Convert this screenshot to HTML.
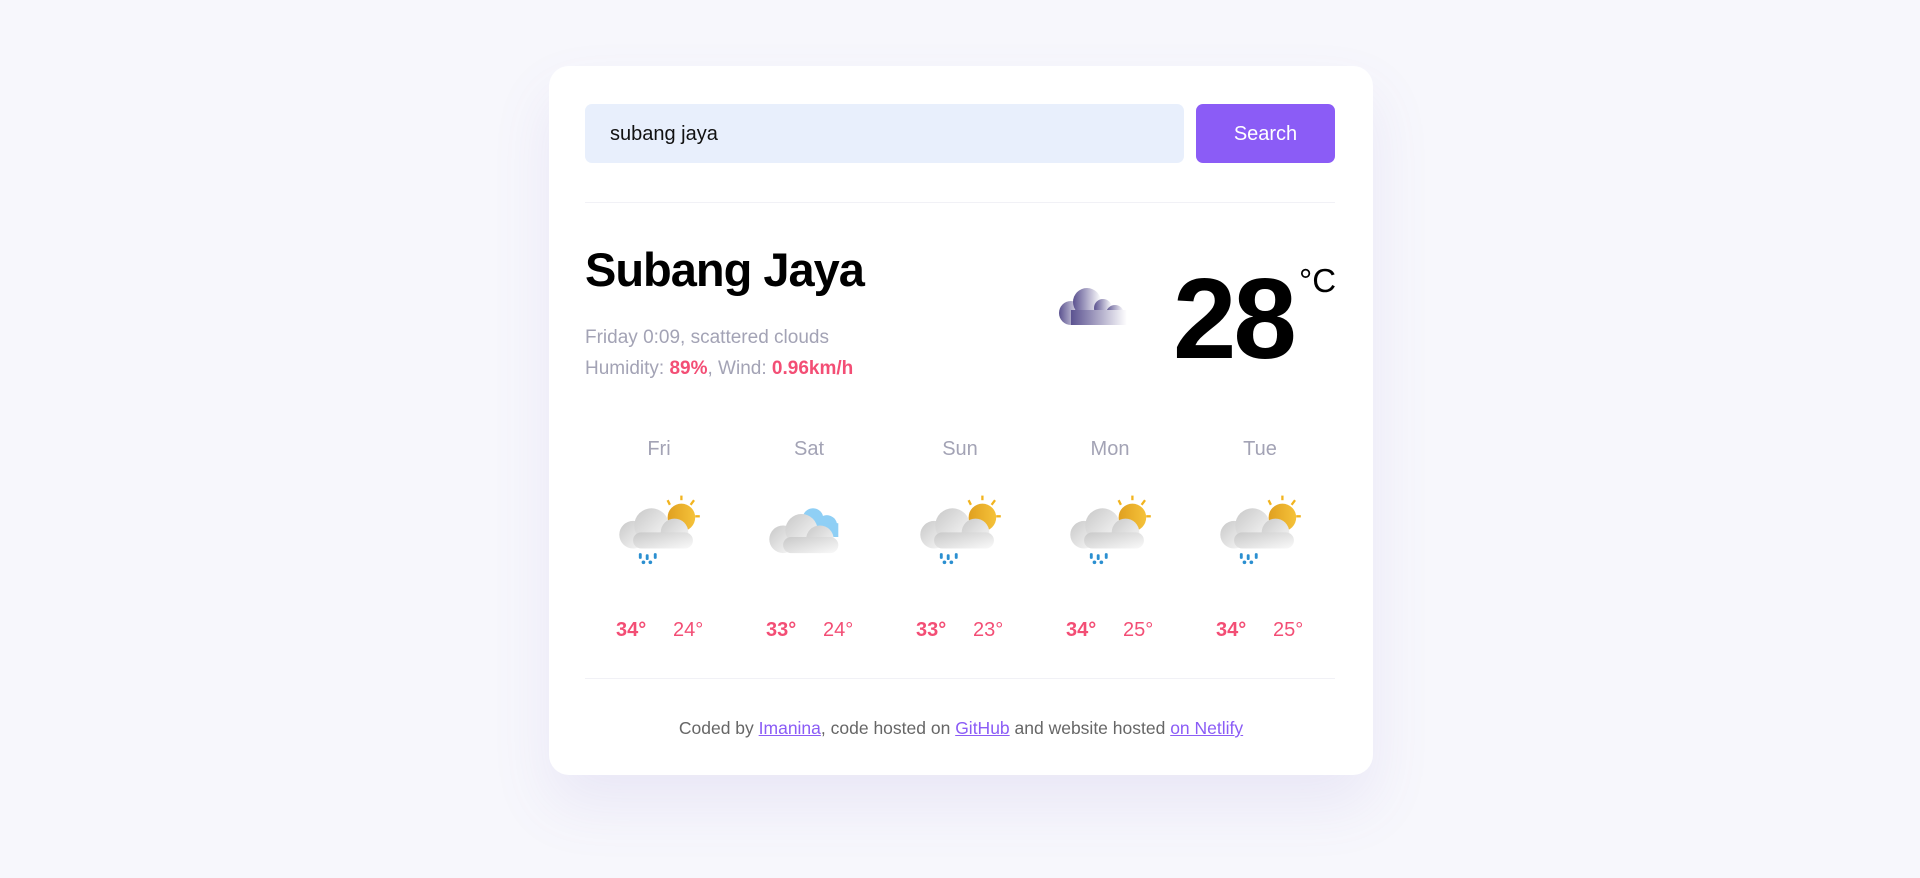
<!DOCTYPE html>
<html><head><meta charset="utf-8"><style>
*{box-sizing:border-box;margin:0;padding:0}
body{width:1920px;height:878px;background:#f7f7fc;font-family:"Liberation Sans",sans-serif;position:relative;overflow:hidden}
.card{position:absolute;left:549px;top:66px;width:824px;height:709px;background:#fff;border-radius:20px;box-shadow:0 30px 60px rgba(120,100,200,.10)}
.abs{position:absolute}
.input{left:36px;top:38px;width:599px;height:59px;background:#e8effc;border-radius:7px;font-size:20px;padding:19px 25px;color:#111}
.btn{left:647px;top:38px;width:139px;height:59px;background:#8b5cf6;border-radius:7px;color:#fff;font-size:20px;text-align:center;line-height:61px}
.hr{left:36px;width:750px;height:1px;background:#f1f1f6}
h1{left:36px;top:176px;font-size:47px;font-weight:bold;color:#000;letter-spacing:-1px}
.sub{left:36px;top:256px;font-size:19px;color:#a3a3b5;line-height:31px}
.pk{color:#f34e75;font-weight:bold}
.temp{left:624px;top:188px;font-size:114px;font-weight:bold;color:#000;letter-spacing:-3px}
.unit{left:750px;top:196px;font-size:33px;color:#000}
.dn{font-size:20px;color:#a3a3b5;position:absolute;top:372px;width:150px;text-align:center}
.ic{position:absolute}
.t{position:absolute;top:553px;font-size:20px;color:#f34e75}
.foot{left:0;width:824px;top:652px;text-align:center;font-size:17.5px;color:#666}
.foot a{color:#8b5cf6;text-decoration:underline}
</style></head><body>
<div class="card">
<div class="abs input">subang jaya</div>
<div class="abs btn">Search</div>
<div class="abs hr" style="top:136px"></div>
<h1 class="abs">Subang Jaya</h1>
<div class="abs sub">Friday 0:09, scattered clouds<br>Humidity: <span class="pk">89%</span>, Wind: <span class="pk">0.96km/h</span></div>
<svg class="abs" style="left:508px;top:214px" width="80" height="46" viewBox="0 0 80 46"><defs><linearGradient id="g" x1="0" x2="1"><stop offset="0" stop-color="#5b5290"/><stop offset="1" stop-color="#fff"/></linearGradient></defs><g fill="url(#g)"><circle cx="14" cy="33" r="12"/><circle cx="30" cy="22" r="14"/><circle cx="46" cy="28" r="9"/><circle cx="58" cy="34" r="9"/><rect x="14" y="30" width="56" height="15"/></g></svg>
<div class="abs temp">28</div>
<div class="abs unit">°C</div>
<div class="abs dn" style="left:35px">Fri</div>
<div class="abs dn" style="left:185px">Sat</div>
<div class="abs dn" style="left:336px">Sun</div>
<div class="abs dn" style="left:486px">Mon</div>
<div class="abs dn" style="left:636px">Tue</div>
<svg width="0" height="0" style="position:absolute"><defs>
<linearGradient id="cg" x1="0" x2="1" y1="0" y2="1"><stop offset="0" stop-color="#c8c8c8"/><stop offset="1" stop-color="#fafafa"/></linearGradient>
<linearGradient id="sg" x1="0" x2="1"><stop offset="0" stop-color="#e0a020"/><stop offset="1" stop-color="#f5c23a"/></linearGradient>
<symbol id="rain" viewBox="0 0 80 80"><g stroke="#f2b41f" stroke-width="2"><line x1="44" y1="8" x2="46" y2="12"/><line x1="56" y1="4" x2="56" y2="8"/><line x1="67" y1="8" x2="64" y2="12"/><line x1="68" y1="22" x2="72" y2="22"/></g><circle cx="56" cy="23" r="12" fill="url(#sg)"/><g fill="url(#cg)"><circle cx="14" cy="38" r="12"/><circle cx="30" cy="30" r="15"/><circle cx="50" cy="36" r="12"/><rect x="14" y="36" width="52" height="14" rx="7"/></g><g fill="#2b8fd0"><rect x="19" y="54" width="2.5" height="5" rx="1"/><rect x="25" y="55" width="2.5" height="5" rx="1"/><rect x="32" y="54" width="2.5" height="5" rx="1"/><circle cx="23" cy="62" r="1.6"/><circle cx="29" cy="62" r="1.6"/></g></symbol>
<symbol id="cl" viewBox="0 0 80 80"><g fill="#8fcff5"><circle cx="40" cy="24" r="9"/><circle cx="52" cy="30" r="9"/><rect x="34" y="28" width="28" height="12"/></g><g fill="url(#cg)"><circle cx="14" cy="42" r="12"/><circle cx="30" cy="34" r="14"/><circle cx="46" cy="42" r="12"/><rect x="14" y="40" width="48" height="14" rx="7"/></g></symbol>
</defs></svg>
<svg class="ic" style="left:68px;top:425px" width="92" height="92"><use href="#rain"/></svg>
<svg class="ic" style="left:218px;top:425px" width="92" height="92"><use href="#cl"/></svg>
<svg class="ic" style="left:369px;top:425px" width="92" height="92"><use href="#rain"/></svg>
<svg class="ic" style="left:519px;top:425px" width="92" height="92"><use href="#rain"/></svg>
<svg class="ic" style="left:669px;top:425px" width="92" height="92"><use href="#rain"/></svg>
<div class="t" style="left:67px;font-weight:bold">34°</div><div class="t" style="left:124px">24°</div>
<div class="t" style="left:217px;font-weight:bold">33°</div><div class="t" style="left:274px">24°</div>
<div class="t" style="left:367px;font-weight:bold">33°</div><div class="t" style="left:424px">23°</div>
<div class="t" style="left:517px;font-weight:bold">34°</div><div class="t" style="left:574px">25°</div>
<div class="t" style="left:667px;font-weight:bold">34°</div><div class="t" style="left:724px">25°</div>
<div class="abs hr" style="top:612px"></div>
<div class="abs foot">Coded by <a>Imanina</a>, code hosted on <a>GitHub</a> and website hosted <a>on Netlify</a></div>
</div>
</body></html>
